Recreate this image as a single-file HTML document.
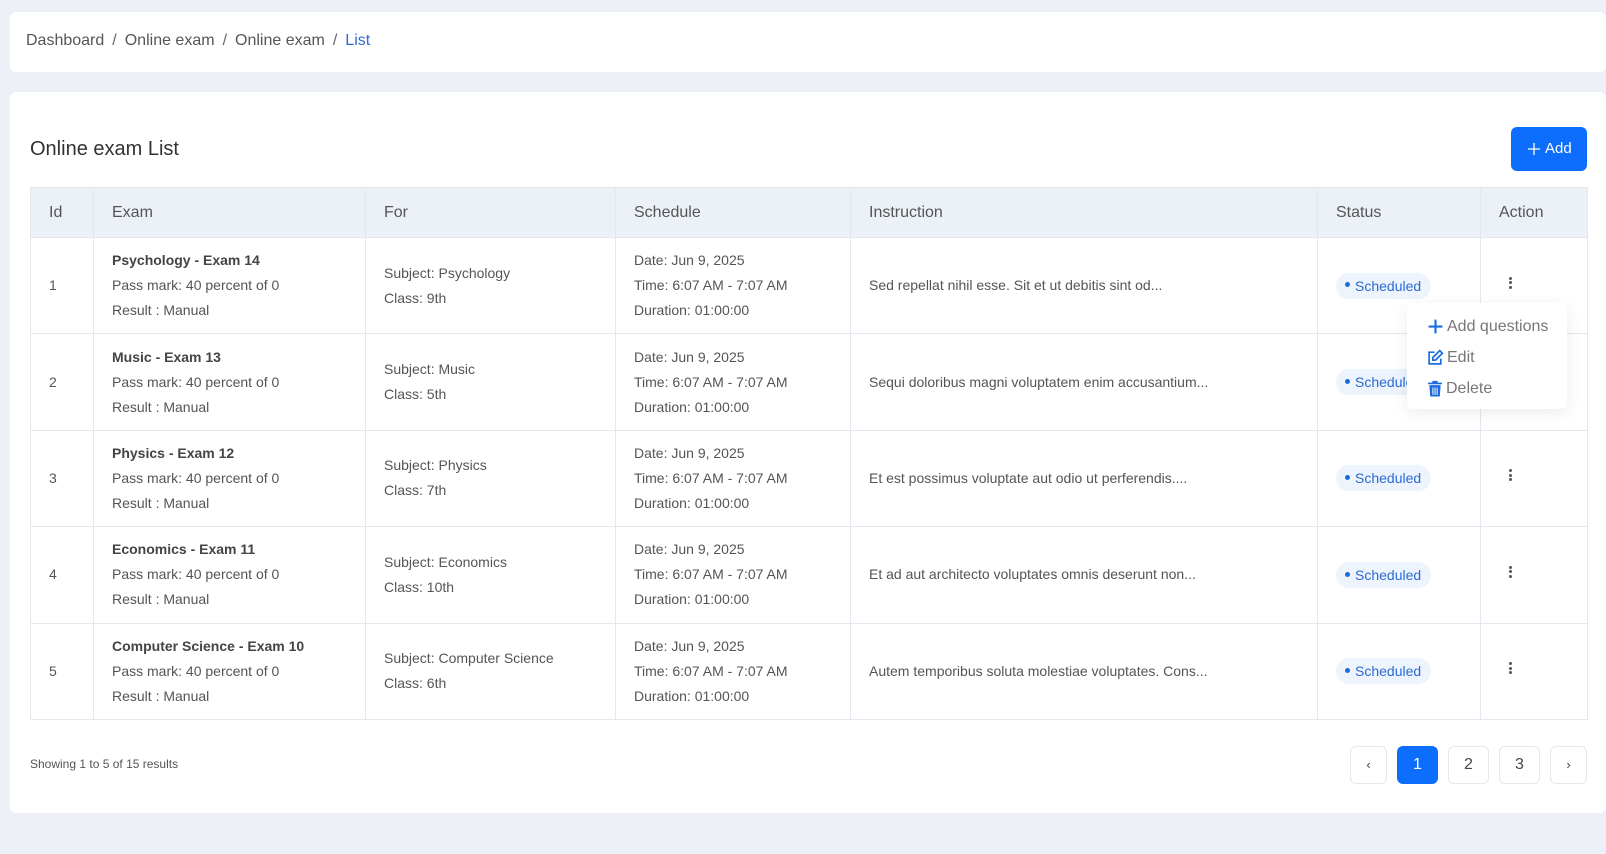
<!DOCTYPE html>
<html><head><meta charset="utf-8"><style>
*{box-sizing:border-box;margin:0;padding:0}
body{width:1606px;height:854px;background:#edf1f7;font-family:"Liberation Sans",Arial,sans-serif;color:#555;position:relative;overflow:hidden}
.bc{position:absolute;left:10px;top:12px;width:1596px;height:60px;background:#fff;border-radius:6px;font-size:16px;color:#555;padding:20px 0 0 16px}
.bc span.s{margin:0 8px;color:#666}
.bc .a{color:#2a6bd1}
.card{position:absolute;left:10px;top:92px;width:1596px;height:721px;background:#fff;border-radius:6px}
.title{position:absolute;left:20px;top:46px;font-size:20px;color:#333}
.add{position:absolute;left:1501px;top:35px;width:76px;height:44px;background:#0d6efd;border-radius:6px;color:#fff;font-size:15px;padding:13px 0 0 16px;display:flex;gap:4px}
table{position:absolute;left:20px;top:95px;border-collapse:collapse;table-layout:fixed;width:1557px}
th{background:#ecf1f8;height:50px;text-align:left;font-weight:normal;font-size:16px;color:#555;padding-left:18px;border:1px solid #e3e7ee}
td{height:96.4px;border:1px solid #e3e7ee;font-size:14px;color:#555;padding-left:18px;line-height:25px;vertical-align:middle}
td b{color:#444}
.badge{display:inline-block;background:#eef4fd;color:#2a6bd1;border-radius:13px;height:26px;line-height:26px;padding:0 10px 0 9px;font-size:14px}
.badge:before{content:"";display:inline-block;width:5px;height:5px;border-radius:50%;background:#1a6de0;margin-right:5px;vertical-align:middle;position:relative;top:-2px}
.keb{display:inline-block;width:3px;margin-left:10px}
.keb i{display:block;width:3px;height:3px;background:#555;border-radius:50%;margin:1.5px 0}
.dd{position:absolute;left:1407px;top:303px;width:160px;height:106px;background:#fff;border-radius:6px;box-shadow:0 4px 16px rgba(0,0,0,.08);font-size:16px;color:#777;padding-top:8px}
.dd div{height:31px;padding-left:20px;display:flex;align-items:center;gap:3px}
.info{position:absolute;left:20px;top:665px;font-size:12px;color:#555}
.pg{position:absolute;top:654px;height:38px;border:1px solid #e5e7eb;border-radius:6px;text-align:center;line-height:36px;font-size:16px;color:#444;background:#fff}
</style></head><body>
<div class="bc">Dashboard<span class="s">/</span>Online exam<span class="s">/</span>Online exam<span class="s">/</span><span class="a">List</span></div>
<div class="card">
<div class="title">Online exam List</div>
<div class="add"><svg width="14" height="14" viewBox="0 0 14 14" style="margin-top:2px"><path d="M7 1v12M1 7h12" stroke="#fff" stroke-width="1.3"/></svg>Add</div>
<table>
<colgroup><col style="width:63px"><col style="width:272px"><col style="width:250px"><col style="width:235px"><col style="width:467px"><col style="width:163px"><col style="width:107px"></colgroup>
<tr><th>Id</th><th>Exam</th><th>For</th><th>Schedule</th><th>Instruction</th><th>Status</th><th>Action</th></tr>
<tr><td>1</td><td><b>Psychology - Exam 14</b><br>Pass mark: 40 percent of 0<br>Result : Manual</td><td>Subject: Psychology<br>Class: 9th</td><td>Date: Jun 9, 2025<br>Time: 6:07 AM - 7:07 AM<br>Duration: 01:00:00</td><td>Sed repellat nihil esse. Sit et ut debitis sint od...</td><td><span class="badge">Scheduled</span></td><td><span class="keb"><i></i><i></i><i></i></span></td></tr>
<tr><td>2</td><td><b>Music - Exam 13</b><br>Pass mark: 40 percent of 0<br>Result : Manual</td><td>Subject: Music<br>Class: 5th</td><td>Date: Jun 9, 2025<br>Time: 6:07 AM - 7:07 AM<br>Duration: 01:00:00</td><td>Sequi doloribus magni voluptatem enim accusantium...</td><td><span class="badge">Scheduled</span></td><td><span class="keb"><i></i><i></i><i></i></span></td></tr>
<tr><td>3</td><td><b>Physics - Exam 12</b><br>Pass mark: 40 percent of 0<br>Result : Manual</td><td>Subject: Physics<br>Class: 7th</td><td>Date: Jun 9, 2025<br>Time: 6:07 AM - 7:07 AM<br>Duration: 01:00:00</td><td>Et est possimus voluptate aut odio ut perferendis....</td><td><span class="badge">Scheduled</span></td><td><span class="keb"><i></i><i></i><i></i></span></td></tr>
<tr><td>4</td><td><b>Economics - Exam 11</b><br>Pass mark: 40 percent of 0<br>Result : Manual</td><td>Subject: Economics<br>Class: 10th</td><td>Date: Jun 9, 2025<br>Time: 6:07 AM - 7:07 AM<br>Duration: 01:00:00</td><td>Et ad aut architecto voluptates omnis deserunt non...</td><td><span class="badge">Scheduled</span></td><td><span class="keb"><i></i><i></i><i></i></span></td></tr>
<tr><td>5</td><td><b>Computer Science - Exam 10</b><br>Pass mark: 40 percent of 0<br>Result : Manual</td><td>Subject: Computer Science<br>Class: 6th</td><td>Date: Jun 9, 2025<br>Time: 6:07 AM - 7:07 AM<br>Duration: 01:00:00</td><td>Autem temporibus soluta molestiae voluptates. Cons...</td><td><span class="badge">Scheduled</span></td><td><span class="keb"><i></i><i></i><i></i></span></td></tr>
</table>
<div class="info">Showing 1 to 5 of 15 results</div>
<div class="pg" style="left:1340px;width:37px;font-size:13px">‹</div>
<div class="pg" style="left:1387px;width:41px;background:#0d6efd;border-color:#0d6efd;color:#fff">1</div>
<div class="pg" style="left:1438px;width:41px">2</div>
<div class="pg" style="left:1489px;width:41px">3</div>
<div class="pg" style="left:1540px;width:37px;font-size:13px">›</div>
</div>
<div class="dd">
<div><svg width="17" height="17" viewBox="0 0 16 16"><path d="M8 1.5v13M1.5 8h13" stroke="#1a6de0" stroke-width="2"/></svg>Add questions</div>
<div><svg width="17" height="17" viewBox="0 0 16 16" fill="none" stroke="#1a6de0" stroke-width="1.6"><path d="M7 3H2v11h11V9"/><path d="M12 1.5l2.5 2.5L8 10.5H5.5V8z"/></svg>Edit</div>
<div><svg width="16" height="17" viewBox="0 0 15 16"><path d="M1 2.5h13v1.5H1zM5 .8h5v2H5z" fill="#1a6de0"/><path d="M2.2 4.8h10.6l-.8 10.7H3z" fill="#1a6de0"/><path d="M5.5 7v7M7.5 7v7M9.5 7v7" stroke="#fff" stroke-width=".9"/></svg>Delete</div>
</div>
</body></html>
